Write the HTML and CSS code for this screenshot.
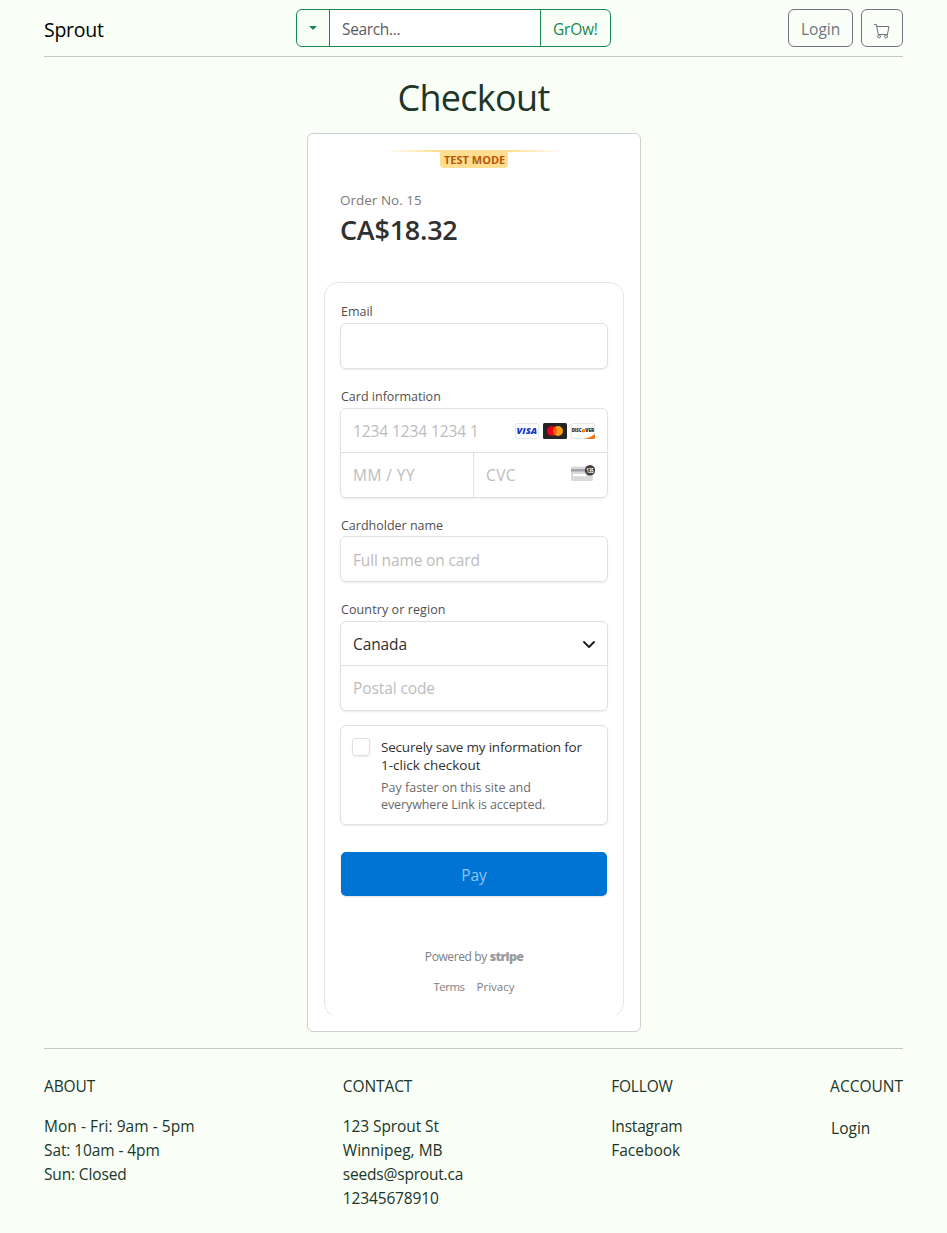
FILE: index.html
```html
<!DOCTYPE html>
<html lang="en">
<head>
<meta charset="utf-8">
<title>Sprout - Checkout</title>
<link rel="stylesheet" href="styles.css">
</head>
<body>
<header class="topbar">
  <a class="brand"><span class="t t-brand">Sprout</span></a>
  <form class="search">
    <div class="search-toggle"><i class="caret"></i></div>
    <div class="search-field"><span class="t t-search">Search...</span></div>
    <div class="search-go"><span class="t t-go">GrOw!</span></div>
  </form>
  <div class="actions">
    <a class="btn btn-login"><span class="t t-login">Login</span></a>
    <a class="btn btn-cart">
      <svg width="16" height="16" viewBox="0 0 16 16" fill="none" stroke="currentColor" stroke-linecap="round" stroke-linejoin="round"><path d="M.5 1.500H2.400L4.300 11.500H13.400M2.800 3.500H15L13.400 11.500"/><circle cx="5" cy="13.500" r="1.500"/><circle cx="12" cy="13.500" r="1.500"/></svg>
    </a>
  </div>
</header>
<main>
  <h1><span class="t t-h1">Checkout</span></h1>
  <section class="card">
    <div class="testmode"><div class="testline"></div><div class="testbadge"><span class="t t-test">TEST MODE</span></div></div>
    <div class="summary">
      <div class="order"><span class="t t-order">Order No. 15</span></div>
      <div class="amount"><span class="t t-amount">CA$18.32</span></div>
    </div>
    <div class="frame">
      <div class="panel">
        <div class="label l-email"><span class="t t-email">Email</span></div>
        <div class="field f-single"></div>
        <div class="label l-card"><span class="t t-card">Card information</span></div>
        <div class="field">
          <div class="row row-line number">
            <span class="t t-number">1234 1234 1234 1</span>
            <div class="brands">
              <svg width="24" height="16" viewBox="0 0 24 16"><rect x=".5" y=".5" width="23" height="15" rx="1.5" fill="#fff" stroke="#e6e6e6"/><text x="1.600" y="11.300" class="visa" textLength="20.500" lengthAdjust="spacingAndGlyphs">VISA</text></svg>
              <svg width="24" height="16" viewBox="0 0 24 16"><rect width="24" height="16" rx="1.5" fill="#252525"/><circle cx="9" cy="8" r="5" fill="#eb001b"/><circle cx="15" cy="8" r="5" fill="#f79e1b"/><path d="M12 4a5 5 0 0 1 0 8 5 5 0 0 1 0-8z" fill="#ff5f00"/></svg>
              <svg width="24" height="16" viewBox="0 0 24 16"><rect x=".5" y=".5" width="23" height="15" rx="1.5" fill="#fff" stroke="#e6e6e6"/><path d="M12.500 16C17 15.200 21.500 13 24 11V14.500Q24 16 22.500 16z" fill="#f27712"/><text x=".7" y="9.400" class="disc" textLength="10" lengthAdjust="spacingAndGlyphs">DISC</text><circle cx="12.500" cy="7.700" r="1.800" fill="#f27712"/><text x="14.300" y="9.400" class="disc" textLength="8.800" lengthAdjust="spacingAndGlyphs">VER</text></svg>
            </div>
          </div>
          <div class="row">
            <div class="half half-left"><span class="t t-mm">MM / YY</span></div>
            <div class="half half-right"><span class="t t-cvc">CVC</span>
              <svg width="24" height="16" viewBox="0 0 24 16"><rect y="1.500" width="22" height="14.500" rx="1.500" fill="#d9d9d9"/><rect y="4" width="22" height="2.500" fill="#a3a3a3"/><rect x="2" y="9" width="13" height="2.200" fill="#fff"/><circle cx="19" cy="5.300" r="5.200" fill="#404040"/><text x="15.600" y="7.600" class="cvcnum" textLength="7" lengthAdjust="spacingAndGlyphs">135</text></svg>
            </div>
          </div>
        </div>
        <div class="label l-holder"><span class="t t-holder">Cardholder name</span></div>
        <div class="field f-single pad"><span class="t t-full">Full name on card</span></div>
        <div class="label l-country"><span class="t t-country">Country or region</span></div>
        <div class="field">
          <div class="row row-line dark"><span class="t t-canada">Canada</span>
            <svg class="chev" width="12" height="12" viewBox="0 0 12 12" fill="none" stroke="#1a1a1a" stroke-width="1.800" stroke-linecap="round" stroke-linejoin="round"><path d="M1 4 6 9 11 4"/></svg>
          </div>
          <div class="row"><span class="t t-postal">Postal code</span></div>
        </div>
        <div class="field save">
          <div class="check"></div>
          <div class="savetext">
            <div class="s1"><span class="t t-s1">Securely save my information for</span></div>
            <div class="s1"><span class="t t-s2">1-click checkout</span></div>
            <div class="s2 first"><span class="t t-s3">Pay faster on this site and</span></div>
            <div class="s2"><span class="t t-s4">everywhere Link is accepted.</span></div>
          </div>
        </div>
        <div class="pay"><span class="t t-pay">Pay</span></div>
        <div class="powered"><span class="t t-pow">Powered by</span><b class="t t-stripe">stripe</b></div>
        <div class="links"><span class="t t-terms">Terms</span><span class="t t-priv">Privacy</span></div>
      </div>
    </div>
  </section>
</main>
<footer>
  <div class="col c1"><h2><span class="t t-about">ABOUT</span></h2><p><span class="t t-f1">Mon - Fri: 9am - 5pm</span></p><p><span class="t t-f2">Sat: 10am - 4pm</span></p><p><span class="t t-f3">Sun: Closed</span></p></div>
  <div class="col c2"><h2><span class="t t-contact">CONTACT</span></h2><p><span class="t t-f4">123 Sprout St</span></p><p><span class="t t-f5">Winnipeg, MB</span></p><p><span class="t t-f6">seeds@sprout.ca</span></p><p><span class="t t-f7">12345678910</span></p></div>
  <div class="col c3"><h2><span class="t t-follow">FOLLOW</span></h2><p><span class="t t-f8">Instagram</span></p><p><span class="t t-f9">Facebook</span></p></div>
  <div class="col c4"><h2><span class="t t-account">ACCOUNT</span></h2><p class="flogin"><span class="t t-f10">Login</span></p></div>
</footer>
</body>
</html>
```
FILE: styles.css
```css
* { box-sizing: border-box; }
body { margin: 0; padding: 0 44px; height: 1233px; overflow: hidden; background: #f9fff7; color: #203529; font: 15.5px/24px "Open Sans", "Noto Sans", sans-serif; }
.t { white-space: nowrap; }
.topbar { display: flex; justify-content: space-between; height: 57px; padding: 9px 0; border-bottom: 1px solid #c2c9c2; }
.brand { width: 252px; font-size: 19.5px; line-height: 41px; color: #000; }
.search { display: flex; width: 315px; height: 38px; border: 1px solid #198754; border-radius: 6px; overflow: hidden; line-height: 39px; margin: 0; }
.search-toggle { width: 32px; display: flex; justify-content: center; padding-top: 16px; }
.caret { width: 0; height: 0; border: 4.5px solid transparent; border-top-color: #198754; border-bottom: 0; }
.search-field { flex: 1; background: #fff; border: solid #198754; border-width: 0 1px; padding-left: 12px; color: #595c5f; }
.search-go { width: 69px; padding-left: 12px; color: #198754; }
.actions { display: flex; gap: 8px; width: 292px; justify-content: flex-end; }
.btn { height: 38px; border: 1px solid #6c757d; border-radius: 6px; color: #6c757d; padding-left: 12px; line-height: 39px; }
.btn-login { width: 65px; }
.btn-cart { width: 42px; padding-top: 13px; line-height: 0; }
h1 { margin: 0; height: 76px; text-align: center; font-weight: 400; font-size: 36px; line-height: 81px; }
.card { width: 334px; height: 899px; margin: 0 0 0 263px; padding: 16px; border: 1px solid #ced2ce; border-radius: 6px; background: #fff; }
.testmode { display: flex; flex-direction: column; align-items: center; height: 40px; }
.testline { width: 180px; height: 2px; background: linear-gradient(90deg, transparent, #ffde92 30%, #ffde92 70%, transparent); }
.testbadge { width: 68px; height: 16px; border-radius: 0 0 4px 4px; background: #ffde92; color: #bb5504; font-size: 11px; font-weight: 700; line-height: 16px; padding-left: 4px; }
.summary { height: 92px; padding-left: 16px; }
.order { font-size: 13.5px; line-height: 20px; color: #7a7a7a; }
.amount { font-size: 27px; font-weight: 600; line-height: 40px; color: #303030; }
.frame { height: 733px; overflow: hidden; }
.panel { width: 300px; height: 735px; border: 1px solid #e6e6e6; border-radius: 14px; padding: 20px 15px 0; }
.label { font-size: 12.5px; line-height: 16px; color: #505050; padding-left: 1px; }
.l-email { height: 20px; padding-top: 1px; }
.field { border: 1px solid #e0e0e0; border-radius: 6px; box-shadow: 0 1px 2px rgba(0,0,0,.08); color: #bcbcbc; width: 268px; }
.f-single { height: 46px; }
.pad { padding-left: 12px; line-height: 46px; }
.l-card { padding-top: 20px; height: 39px; }
.row { display: flex; height: 44px; padding: 0 12px; line-height: 45px; }
.row-line { border-bottom: 1px solid #e0e0e0; }
.brands { display: flex; gap: 4px; margin-left: auto; padding-top: 14px; }
.visa { font: italic 800 9px "Open Sans"; fill: #1434cb; }
.disc { font: 800 4.5px "Open Sans"; fill: #222; }
.cvcnum { font: 700 6.5px "Open Sans"; fill: #fff; }
.half-left { width: 121px; border-right: 1px solid #e0e0e0; }
.half-right { flex: 1; display: flex; justify-content: space-between; padding: 0 0 0 12px; }
.half-right svg { margin-top: 12px; }
.l-holder { padding-top: 20px; height: 38px; }
.l-country { padding-top: 20px; height: 39px; }
.dark { color: #303030; }
.chev { margin: 16px 0 0 auto; }
.save { margin-top: 14px; height: 100px; display: flex; padding: 12px 0 0 11px; }
.check { width: 18px; height: 18px; border: 1px solid #e0e0e0; border-radius: 3px; box-shadow: 0 1px 2px rgba(0,0,0,.08); }
.savetext { padding-left: 11px; }
.s1 { font-size: 13.5px; line-height: 18px; color: #303030; }
.s2 { font-size: 12.5px; line-height: 17px; color: #6a6a6a; }
.first { margin-top: 5px; }
.pay { margin: 27px 0 0 1px; width: 266px; height: 44px; border-radius: 5px; background: #0074d4; color: #8fc4ee; text-align: center; line-height: 46px; box-shadow: 0 1px 2px rgba(0,0,0,.12); }
.powered { display: flex; justify-content: center; gap: 3px; margin-top: 53px; font-size: 12px; line-height: 16px; color: #7e7e7e; }
.links { display: flex; justify-content: center; gap: 12px; margin-top: 14px; font-size: 11.5px; line-height: 16px; color: #7e7e7e; }
footer { display: flex; margin-top: 16px; border-top: 1px solid #c2c9c2; padding-top: 25px; }
h2 { margin: 0 0 16px; font: inherit; }
p { margin: 0; }
.c1 { width: 299px; }
.c2 { width: 268.5px; }
.c3 { width: 219px; }
.flogin { padding: 2px 0 0 1px; }

/* Per-text tracking */
.t-brand { letter-spacing: -.25px; }
.t-search { letter-spacing: -.35px; }
.t-go { letter-spacing: -.2px; }
.t-h1 { letter-spacing: -.7px; }
.t-amount { letter-spacing: -.25px; }
.t-number { letter-spacing: -.1px; }
.t-mm { letter-spacing: .45px; }
.t-cvc { letter-spacing: .4px; }
.t-full { letter-spacing: -.15px; }
.t-country { letter-spacing: .1px; }
.t-canada, .t-postal, .t-s4, .t-f2, .t-f4, .t-about, .t-contact { letter-spacing: -.1px; }
.t-s1 { letter-spacing: -.2px; }
.t-pow { letter-spacing: -.4px; }
.t-stripe { font-weight: 800; font-size: 12.5px; letter-spacing: -.75px; color: #9c9c9c; }
.t-terms { letter-spacing: -.5px; }
.t-f1 { letter-spacing: .05px; }
.t-f3, .t-f7 { letter-spacing: -.15px; }
.t-f6, .t-f8, .t-follow { letter-spacing: -.2px; }
```
